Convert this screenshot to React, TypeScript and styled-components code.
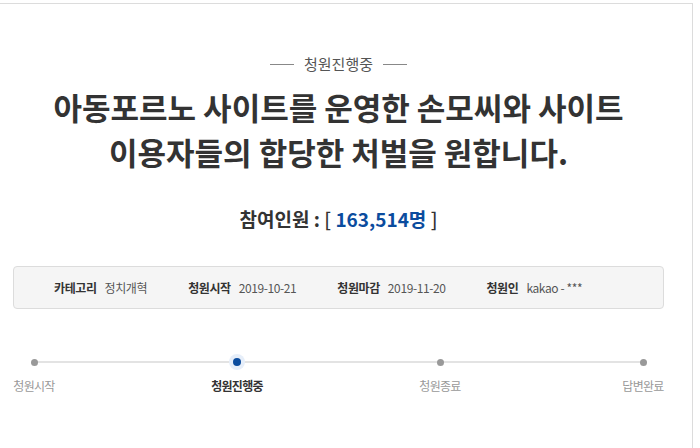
import React from "react";
import styled, { createGlobalStyle } from "styled-components";

const GlobalStyle = createGlobalStyle`
  body {
    margin: 0;
    background: #fff;
    font-family: "Noto Sans CJK KR", "Noto Sans", sans-serif;
    color: #333;
  }
`;

const steps = [
  { label: "청원시작", active: false },
  { label: "청원진행중", active: true },
  { label: "청원종료", active: false },
  { label: "답변완료", active: false },
];

const info = [
  { label: "카테고리", value: "정치개혁" },
  { label: "청원시작", value: "2019-10-21" },
  { label: "청원마감", value: "2019-11-20" },
  { label: "청원인", value: "kakao - ***" },
];

const App: React.FC = () => {
  return (
    <>
      <GlobalStyle />
      <PageLayout>
        <ContentLayout>
          <Status>청원진행중</Status>
          <Title>
            아동포르노 사이트를 운영한 손모씨와 사이트
            <br />
            이용자들의 합당한 처벌을 원합니다.
          </Title>
          <Count>
            참여인원 : <Bracket>[</Bracket> <Number>163,514명</Number>{" "}
            <Bracket>]</Bracket>
          </Count>

          <InfoBox>
            {info.map((item) => (
              <InfoItem key={item.label}>
                <InfoLabel>{item.label}</InfoLabel>
                <InfoValue>{item.value}</InfoValue>
              </InfoItem>
            ))}
          </InfoBox>

          <Steps>
            {steps.map((step) => (
              <Step key={step.label}>
                <DotWrap>
                  <Dot $active={step.active} />
                </DotWrap>
                <StepLabel $active={step.active}>{step.label}</StepLabel>
              </Step>
            ))}
          </Steps>
        </ContentLayout>
      </PageLayout>
    </>
  );
};

export default App;

const PageLayout = styled.div`
  box-sizing: border-box;
  width: 693px;
  height: 445px;
  margin-top: 3px;
  border-top: 1px solid #dcdcdc;
  border-right: 1px solid #dcdcdc;
`;

const ContentLayout = styled.div`
  width: 651px;
  margin-left: 13px;
  display: flex;
  flex-direction: column;
  align-items: center;
`;

const Status = styled.div`
  margin-top: 50px;
  display: flex;
  align-items: center;
  gap: 10px;
  font-size: 15px;
  line-height: 20px;
  color: #555;

  &::before,
  &::after {
    content: "";
    width: 24px;
    height: 1px;
    background: #888;
  }
`;

const Title = styled.h1`
  margin: 10px 0 0;
  text-align: center;
  font-size: 31px;
  font-weight: 700;
  line-height: 45px;
  color: #333;
`;

const Count = styled.div`
  margin-top: 32px;
  font-size: 19px;
  font-weight: 700;
  line-height: 26px;
  color: #333;
`;

const Bracket = styled.span`
  font-weight: 500;
`;

const Number = styled.span`
  color: #0b4c9e;
`;

const InfoBox = styled.div`
  box-sizing: border-box;
  align-self: stretch;
  margin-top: 34px;
  height: 43px;
  padding-left: 40px;
  display: flex;
  align-items: center;
  gap: 41px;
  border: 1px solid #dcdcdc;
  border-radius: 4px;
  background: #f5f5f5;
`;

const InfoItem = styled.div`
  display: flex;
  align-items: center;
  gap: 8px;
  font-size: 12px;
  letter-spacing: -0.4px;
`;

const InfoLabel = styled.span`
  font-weight: 700;
  color: #333;
`;

const InfoValue = styled.span`
  color: #555;
`;

const Steps = styled.div`
  position: relative;
  align-self: stretch;
  margin: 45px 21px 0;
  display: flex;
  justify-content: space-between;

  &::before {
    content: "";
    position: absolute;
    left: 0;
    right: 0;
    top: 7px;
    height: 2px;
    background: #e3e3e3;
  }
`;

const Step = styled.div`
  position: relative;
  width: 0;
  display: flex;
  flex-direction: column;
  align-items: center;
`;

const DotWrap = styled.div`
  height: 16px;
  display: flex;
  align-items: center;
  justify-content: center;
`;

const Dot = styled.div<{ $active: boolean }>`
  flex: none;
  width: ${(p) => (p.$active ? "8px" : "7px")};
  height: ${(p) => (p.$active ? "8px" : "7px")};
  border-radius: 50%;
  background: ${(p) => (p.$active ? "#0b4c9e" : "#999")};
  box-shadow: ${(p) => (p.$active ? "0 0 0 4px #e6eef9" : "none")};
`;

const StepLabel = styled.div<{ $active: boolean }>`
  margin-top: 8px;
  white-space: nowrap;
  font-size: 12px;
  line-height: 16px;
  letter-spacing: -0.7px;
  font-weight: ${(p) => (p.$active ? 700 : 400)};
  color: ${(p) => (p.$active ? "#333" : "#999")};
`;
